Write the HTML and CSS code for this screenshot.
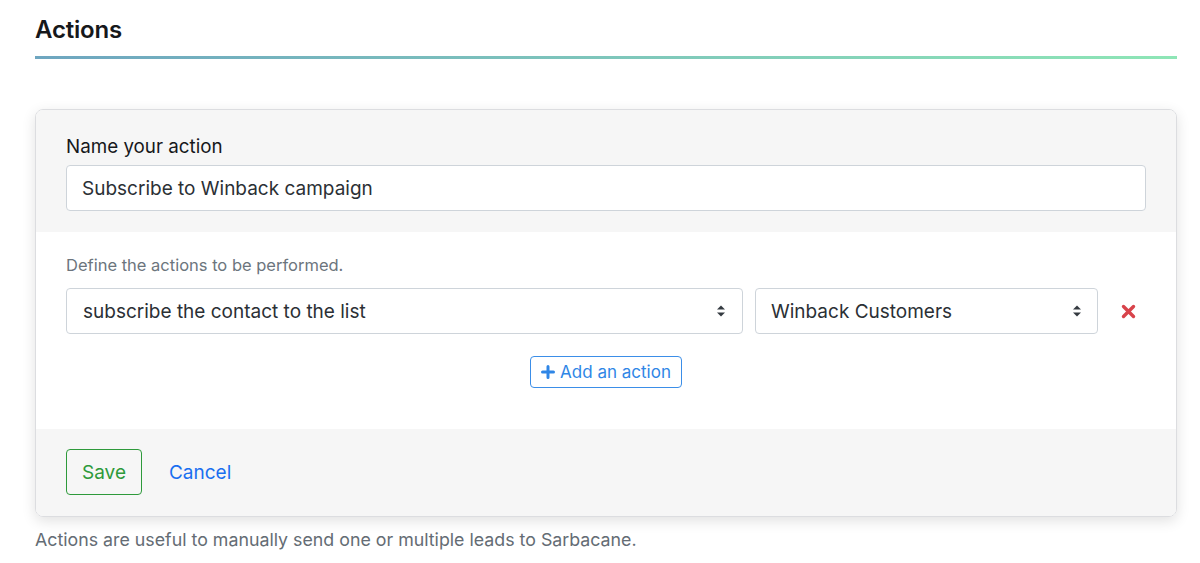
FILE: index.html
```html
<!DOCTYPE html>
<html lang="en">

<head>
    <meta charset="UTF-8">
    <meta name="viewport" content="width=device-width, initial-scale=1.0">
    <title>Actions</title>
    <link rel="stylesheet" href="styles.css">
</head>

<body>

    <div class="page">
        <h1 class="title">Actions</h1>
        <div class="title-line"></div>

        <div class="card">
            <div class="card-head">
                <label class="label" for="action-name">Name your action</label>
                <input class="input" id="action-name" type="text" value="Subscribe to Winback campaign">
            </div>

            <div class="card-body">
                <p class="hint">Define the actions to be performed.</p>
                <div class="action-row">
                    <div class="select select-main">
                        <span>subscribe the contact to the list</span>
                        <svg class="caret" width="10" height="14" viewBox="0 0 10 14">
                            <path d="M1 5.5 L5 1.5 L9 5.5 Z M1 8.5 L5 12.5 L9 8.5 Z" fill="#343a40" />
                        </svg>
                    </div>
                    <div class="select select-list">
                        <span>Winback Customers</span>
                        <svg class="caret" width="10" height="14" viewBox="0 0 10 14">
                            <path d="M1 5.5 L5 1.5 L9 5.5 Z M1 8.5 L5 12.5 L9 8.5 Z" fill="#343a40" />
                        </svg>
                    </div>
                    <button class="remove" title="Remove">
                        <svg width="15" height="15" viewBox="0 0 15 15">
                            <path d="M2.5 2.5 L12.5 12.5 M12.5 2.5 L2.5 12.5" stroke="#d8434b" stroke-width="3.4" stroke-linecap="round" />
                        </svg>
                    </button>
                </div>
                <div class="add-wrap">
                    <button class="btn-add">
                        <svg width="14" height="14" viewBox="0 0 14 14">
                            <path d="M7 1.5 V12.5 M1.5 7 H12.5" stroke="#2f86e6" stroke-width="3" stroke-linecap="round" />
                        </svg>
                        Add an action
                    </button>
                </div>
            </div>

            <div class="card-foot">
                <button class="btn-save">Save</button>
                <a class="link-cancel" href="#">Cancel</a>
            </div>
        </div>

        <p class="note">Actions are useful to manually send one or multiple leads to Sarbacane.</p>
    </div>

</body>

</html>
```

FILE: styles.css
```css
* {
    margin: 0;
    padding: 0;
    box-sizing: border-box;
    font-family: Inter, 'Noto Sans', sans-serif;
}

body {
    background-color: #ffffff;
    color: #212529;
}

.page {
    padding: 14px 23px 0 35px;
}

.title {
    font-size: 24px;
    font-weight: 600;
    color: #16181b;
    line-height: 32px;
    letter-spacing: -0.2px;
}

.title-line {
    height: 3px;
    margin-top: 10px;
    background: linear-gradient(to right, #6ea6c0, #8ee6b6);
}

.card {
    margin-top: 50px;
    border: 1px solid #dcdde0;
    border-radius: 8px;
    overflow: hidden;
    box-shadow: 0 4px 14px rgba(0, 0, 0, 0.12);
}

.card-head {
    background-color: #f6f6f6;
    padding: 23px 30px 21px;
}

.label {
    display: block;
    font-size: 18.8px;
    line-height: 27px;
    color: #16181b;
    margin-bottom: 5px;
}

.input {
    width: 100%;
    height: 46px;
    padding: 0 15px;
    font-size: 19px;
    color: #2b3035;
    border: 1px solid #ced4da;
    border-radius: 4px;
    background-color: #ffffff;
    outline: none;
}

.card-body {
    background-color: #ffffff;
    padding: 22px 30px 41px;
}

.hint {
    font-size: 16.5px;
    line-height: 22px;
    color: #6c757d;
    margin-bottom: 12px;
}

.action-row {
    display: flex;
    align-items: center;
    gap: 12px;
}

.select {
    height: 46px;
    display: flex;
    align-items: center;
    justify-content: space-between;
    padding: 0 16px;
    font-size: 19px;
    color: #2b3035;
    border: 1px solid #ced4da;
    border-radius: 4px;
    background-color: #ffffff;
}

.select-main {
    width: 677px;
}

.select-list {
    width: 343px;
    padding-left: 15px;
    padding-right: 15px;
}

.remove {
    width: 36px;
    height: 36px;
    border: none;
    background: none;
    display: flex;
    align-items: center;
    justify-content: center;
    cursor: pointer;
}

.add-wrap {
    display: flex;
    justify-content: center;
    margin-top: 22px;
}

.btn-add {
    height: 32px;
    display: flex;
    align-items: center;
    gap: 5px;
    padding: 0 10px;
    font-size: 17px;
    color: #2f86e6;
    background-color: #ffffff;
    border: 1px solid #3b8ee8;
    border-radius: 4px;
    cursor: pointer;
}

.card-foot {
    background-color: #f6f6f6;
    padding: 20px 30px 21px;
    display: flex;
    align-items: center;
    gap: 27px;
}

.btn-save {
    height: 46px;
    padding: 0 15px;
    font-size: 19px;
    color: #2e9a3b;
    background-color: transparent;
    border: 1px solid #2e9a3b;
    border-radius: 4px;
    cursor: pointer;
}

.link-cancel {
    font-size: 19px;
    color: #1a6ff0;
    text-decoration: none;
}

.note {
    margin-top: 11px;
    font-size: 17.8px;
    line-height: 24px;
    color: #646c74;
}
```
